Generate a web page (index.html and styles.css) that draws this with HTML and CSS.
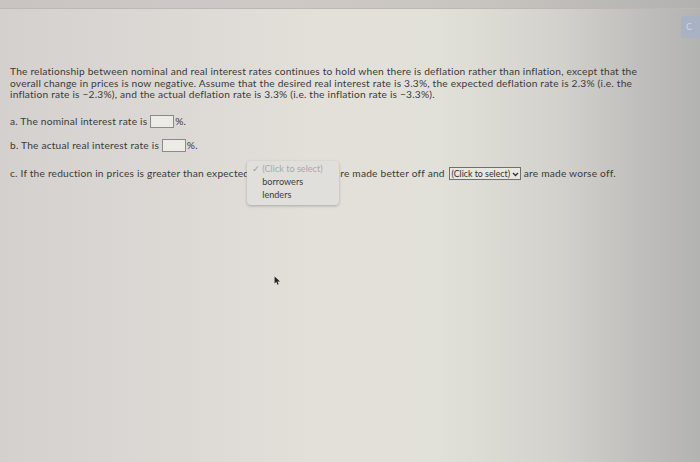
FILE: index.html
```html
<!DOCTYPE html>
<html>
<head>
<meta charset="utf-8">
<link rel="stylesheet" href="styles.css">
</head>
<body>
<div class="screen">
  <div class="topbar"></div>
  <div class="corner-btn">C</div>
  <div class="content">
    <p class="intro">The relationship between nominal and real interest rates continues to hold when there is deflation rather than inflation, except that the<br>overall change in prices is now negative. Assume that the desired real interest rate is 3.3%, the expected deflation rate is 2.3% (i.e. the<br>inflation rate is &minus;2.3%), and the actual deflation rate is 3.3% (i.e. the inflation rate is &minus;3.3%).</p>
    <p class="q qa">a. The nominal interest rate is <span class="box"></span>%.</p>
    <p class="q qb">b. The actual real interest rate is <span class="box"></span>%.</p>
    <p class="q qc">c. If the reduction in prices is greater than expected<span class="sel-open"><span class="menu"><span class="opt placeholder"><span class="chk">&#10003;</span>(Click to select)</span><span class="opt">borrowers</span><span class="opt">lenders</span></span></span>re made better off and <span class="select">(Click to select)<svg class="caret" viewBox="0 0 8 6" width="7" height="5"><path d="M1 1.2 L4 4.3 L7 1.2" fill="none" stroke="#333" stroke-width="1.6"/></svg></span> are made worse off.</p>
  </div>
  <svg class="cursor" viewBox="0 0 8 12" width="7" height="10"><path d="M0.5 0.5 L0.5 9 L2.6 7 L4 10.5 L5.4 9.9 L4 6.6 L7 6.6 Z" fill="#222"/></svg>
</div>
</body>
</html>
```
FILE: styles.css
```css
html, body {
  margin: 0;
  padding: 0;
}
body {
  width: 700px;
  height: 462px;
  overflow: hidden;
}
.screen {
  position: relative;
  width: 700px;
  height: 462px;
  background: linear-gradient(90deg, #d4d0ce 0%, #dcd9d5 25%, #e2e0d9 45%, #e2e1d9 62%, #d2d1cc 80%, #bdbcba 93%, #b3b3b1 100%);
  font-family: Lato, "Open Sans", sans-serif;
  color: #3b3a3a;
}
.topbar {
  height: 8px;
  background: linear-gradient(90deg, #c9c3c2 0%, #cfc9c6 40%, #c7c4bf 70%, #b2b1af 100%);
  border-bottom: 1px solid #bcb8b5;
}
.corner-btn {
  position: absolute;
  right: 0;
  top: 16px;
  width: 19px;
  height: 22px;
  background: #a8b2c3;
  border-radius: 3px 0 0 3px;
  color: #cfd6e0;
  font-size: 9px;
  line-height: 22px;
  padding-left: 5px;
  box-sizing: border-box;
  overflow: hidden;
}
.content {
  padding: 57px 0 0 10px;
}
.intro {
  margin: 0;
  font-size: 10.2px;
  letter-spacing: 0.2px;
  line-height: 11.6px;
  white-space: nowrap;
}
.q {
  margin: 0;
  font-size: 10.2px;
  letter-spacing: 0.2px;
  line-height: 12px;
  white-space: nowrap;
}
.qa { margin-top: 14px; }
.qb { margin-top: 11px; }
.qc { margin-top: 15px; }
.box {
  display: inline-block;
  width: 22px;
  height: 11px;
  border: 1px solid #8a8a8a;
  background: #ecebe6;
  vertical-align: -3px;
  margin-right: 1px;
}
.sel-open {
  position: relative;
  display: inline-block;
  width: 91px;
  height: 10px;
  vertical-align: middle;
}
.menu {
  position: absolute;
  left: -2px;
  top: -8px;
  width: 92px;
  height: 44px;
  background: #e0dfdb;
  border-radius: 4px;
  box-shadow: 0 1px 3px rgba(0,0,0,0.25);
  display: flex;
  flex-direction: column;
  padding: 1px 0 0 5px;
  box-sizing: border-box;
  font-size: 9.1px;
  letter-spacing: 0;
  line-height: 13px;
  color: #3d3d3d;
}
.opt {
  padding-left: 10px;
}
.placeholder {
  padding-left: 0;
  color: #a9a9ad;
}
.chk {
  display: inline-block;
  width: 10px;
  color: #9a9a9e;
}
.select {
  display: inline-block;
  border: 1px solid #6f6f6f;
  background: #e8e7e2;
  font-size: 8.8px;
  letter-spacing: 0;
  line-height: 11px;
  padding: 0 1px 0 2px;
  margin-left: 1px;
  vertical-align: 0px;
  color: #2f2f2f;
}
.caret {
  margin-left: 2px;
  vertical-align: 0px;
}
.cursor {
  position: absolute;
  left: 274px;
  top: 276px;
}
```
